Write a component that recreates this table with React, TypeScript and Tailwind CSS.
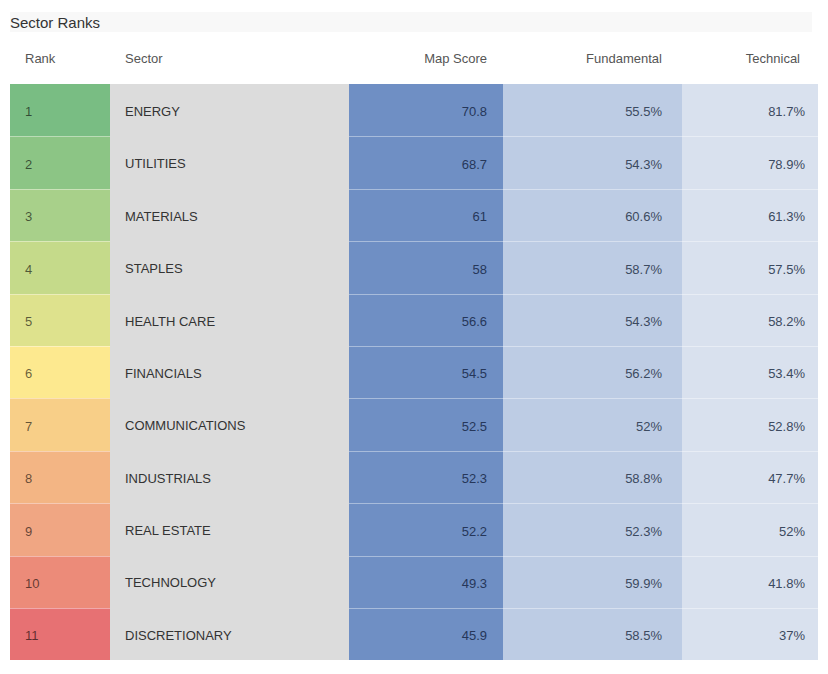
import React from "react";

const rows = [
  { rank: 1, sector: "ENERGY", map: "70.8", fund: "55.5%", tech: "81.7%", bg: "#79bd83" },
  { rank: 2, sector: "UTILITIES", map: "68.7", fund: "54.3%", tech: "78.9%", bg: "#8cc585" },
  { rank: 3, sector: "MATERIALS", map: "61", fund: "60.6%", tech: "61.3%", bg: "#a8d08a" },
  { rank: 4, sector: "STAPLES", map: "58", fund: "58.7%", tech: "57.5%", bg: "#c5da8a" },
  { rank: 5, sector: "HEALTH CARE", map: "56.6", fund: "54.3%", tech: "58.2%", bg: "#dee28d" },
  { rank: 6, sector: "FINANCIALS", map: "54.5", fund: "56.2%", tech: "53.4%", bg: "#fde98f" },
  { rank: 7, sector: "COMMUNICATIONS", map: "52.5", fund: "52%", tech: "52.8%", bg: "#f8cf88" },
  { rank: 8, sector: "INDUSTRIALS", map: "52.3", fund: "58.8%", tech: "47.7%", bg: "#f3b584" },
  { rank: 9, sector: "REAL ESTATE", map: "52.2", fund: "52.3%", tech: "52%", bg: "#f0a683" },
  { rank: 10, sector: "TECHNOLOGY", map: "49.3", fund: "59.9%", tech: "41.8%", bg: "#ec8b79" },
  { rank: 11, sector: "DISCRETIONARY", map: "45.9", fund: "58.5%", tech: "37%", bg: "#e77173" },
];

export default function App() {
  return (
    <div
      className="w-[828px] h-[674px] bg-white pt-[12px] pl-[10px]"
      style={{ fontFamily: '"Liberation Sans", Arial, sans-serif' }}
    >
      <div className="w-[802px] h-[20px] bg-[#f8f8f8] flex items-center text-[15px] text-[#333] leading-none">
        Sector Ranks
      </div>
      <div className="w-[808px]">
        <div className="grid grid-cols-[100px_239px_154px_179px_136px] h-[52px] items-center pt-[2px] text-[13px] text-[#555]">
          <div className="pl-[15px]">Rank</div>
          <div className="pl-[15px]">Sector</div>
          <div className="text-right pr-[16px]">Map Score</div>
          <div className="text-right pr-[20px]">Fundamental</div>
          <div className="text-right pr-[18px]">Technical</div>
        </div>
        {rows.map((r, i) => (
          <div
            key={r.rank}
            className="grid grid-cols-[100px_239px_154px_179px_136px] h-[52.4px] text-[13px]"
          >
            <div
              className={`flex items-center pl-[15px] pt-[3px] text-black/60 ${i > 0 ? "border-t border-white/40" : ""}`}
              style={{ backgroundColor: r.bg }}
            >
              {r.rank}
            </div>
            <div className="flex items-center pl-[15px] pt-[3px] bg-[#dcdcdc] text-[#333]">{r.sector}</div>
            <div
              className={`flex items-center justify-end pr-[16px] pt-[3px] bg-[#6f8fc4] text-[#26375a] ${i > 0 ? "border-t border-white/40" : ""}`}
            >
              {r.map}
            </div>
            <div
              className={`flex items-center justify-end pr-[20px] pt-[3px] bg-[#bdcce4] text-[#3c4a60] ${i > 0 ? "border-t border-white/40" : ""}`}
            >
              {r.fund}
            </div>
            <div
              className={`flex items-center justify-end pr-[13px] pt-[3px] bg-[#d9e1ee] text-[#3c4a60] ${i > 0 ? "border-t border-white/40" : ""}`}
            >
              {r.tech}
            </div>
          </div>
        ))}
      </div>
    </div>
  );
}
